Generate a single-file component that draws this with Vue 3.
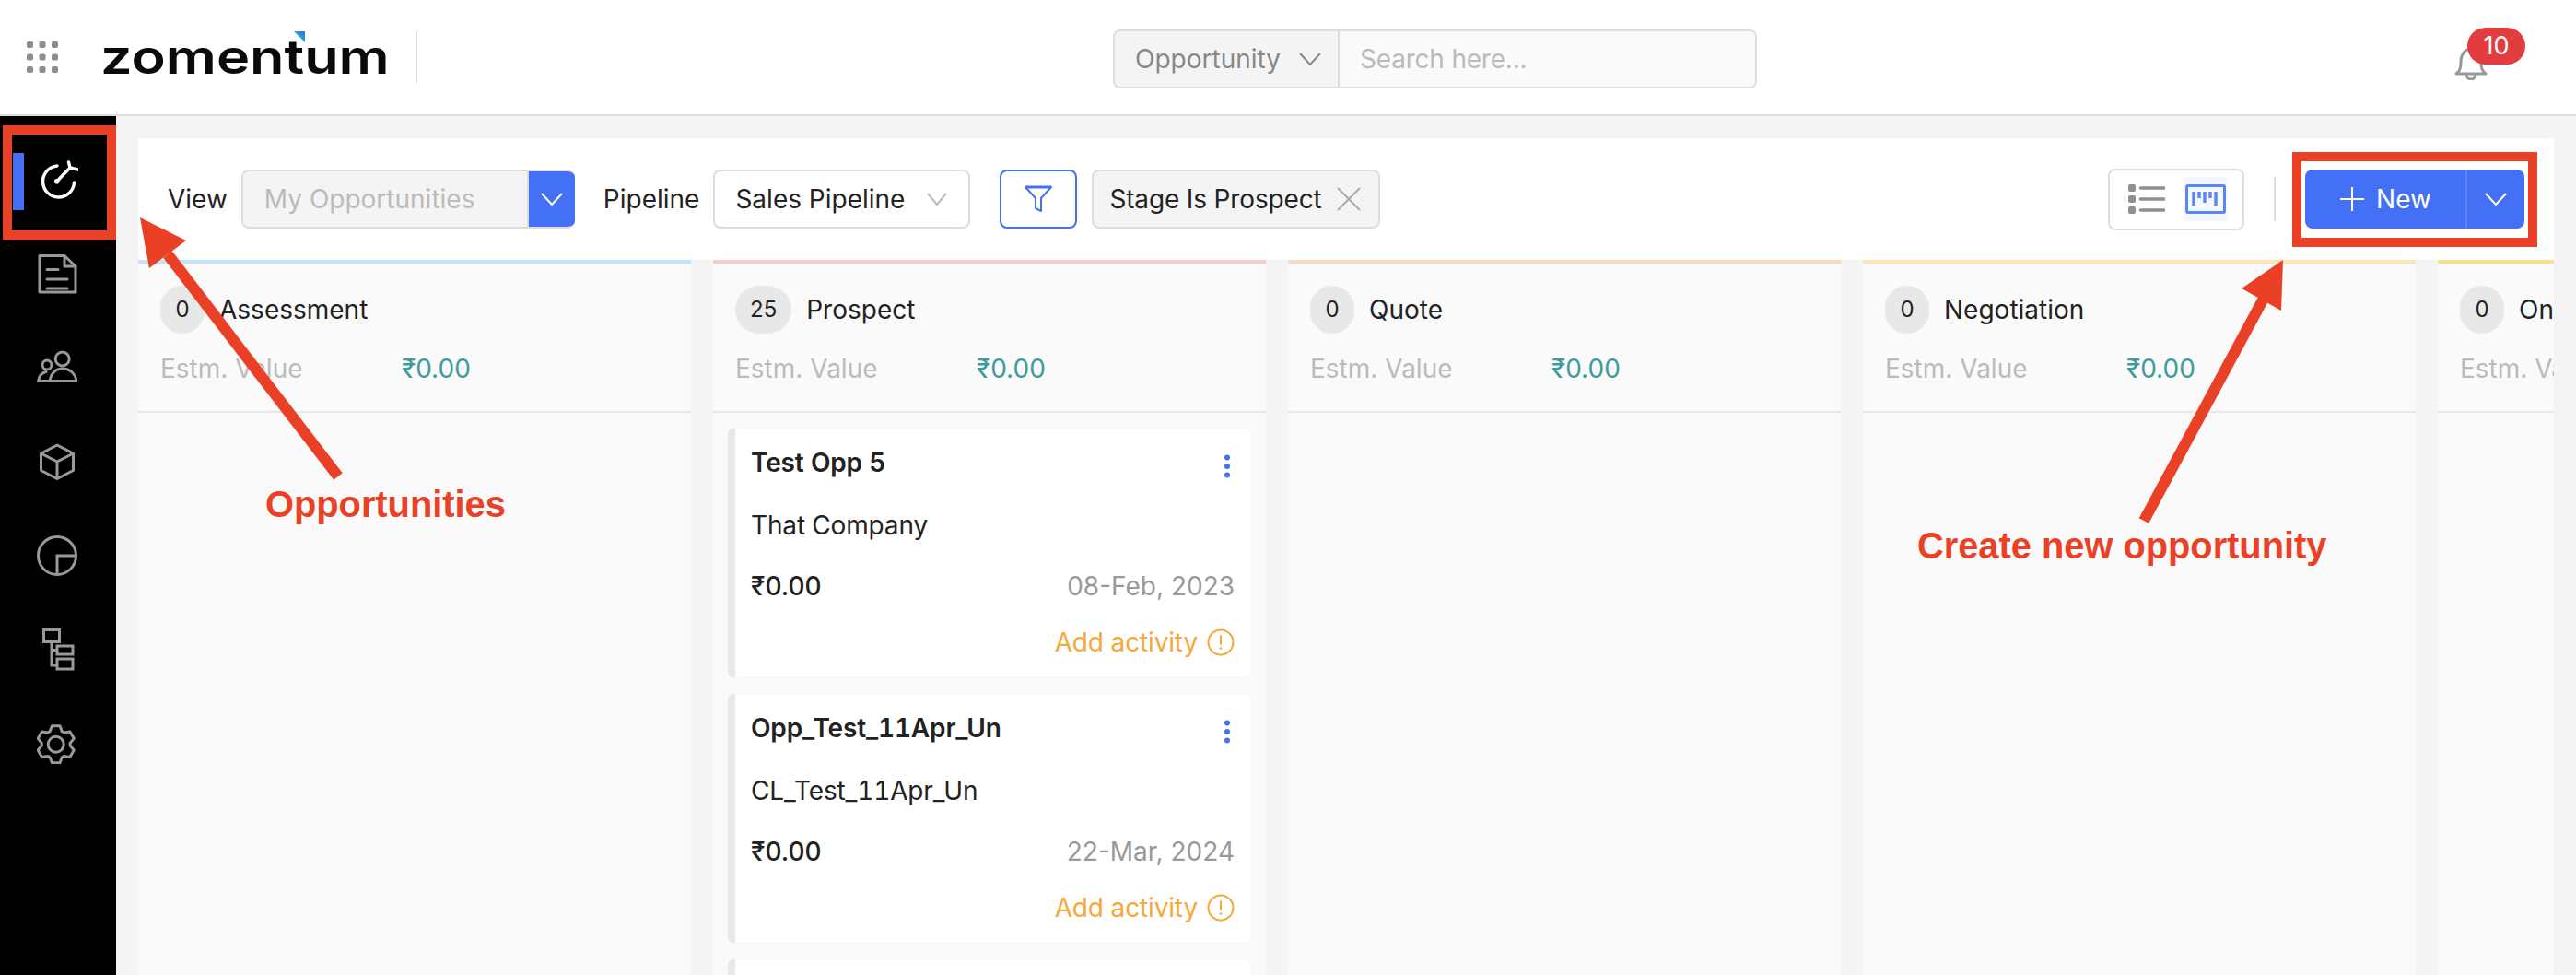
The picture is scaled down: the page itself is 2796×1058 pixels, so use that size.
<template>
  <div class="page">
    <!-- top bar -->
    <header class="topbar">
      <svg class="apps" width="34" height="34" viewBox="0 0 34 34">
        <rect v-for="d in appDots" :key="d.k" :x="d.x" :y="d.y" width="7" height="7" rx="2" fill="#8c8c8c" />
      </svg>
      <div class="logo">
        <span class="logo-text">zomentum</span>
        <svg class="logo-mark" width="12" height="12" viewBox="0 0 12 12">
          <defs>
            <linearGradient id="logoGrad" x1="1" y1="0" x2="0" y2="1">
              <stop offset="0" stop-color="#3b62e8" />
              <stop offset="0.5" stop-color="#27a7d8" />
              <stop offset="1" stop-color="#5fd06a" />
            </linearGradient>
          </defs>
          <polygon points="0,0 12,0 12,12" fill="url(#logoGrad)" />
        </svg>
      </div>
      <div class="logo-sep"></div>

      <div class="search">
        <div class="search-type">
          <span>Opportunity</span>
          <svg width="24" height="14" viewBox="0 0 24 14"><path d="M1 1l11 12L23 1" fill="none" stroke="#888" stroke-width="2" /></svg>
        </div>
        <div class="search-input">Search here...</div>
      </div>

      <div class="bell">
        <svg width="36" height="38" viewBox="0 0 36 38">
          <path d="M2 31c4-3 5-6 5-13 0-8 5-14 11-14s11 6 11 14c0 7 1 10 5 13z" fill="none" stroke="#999" stroke-width="3" stroke-linejoin="round" />
          <path d="M13 32a5 5 0 0 0 10 0" fill="none" stroke="#999" stroke-width="3" />
        </svg>
        <span class="bell-badge">10</span>
      </div>
    </header>

    <div class="body">
      <!-- left nav -->
      <nav class="sidenav">
        <div class="nav-item active">
          <span class="nav-bar"></span>
          <svg width="44" height="44" viewBox="0 0 44 44" fill="none" stroke="#fff" stroke-width="3.4" stroke-linecap="round">
            <path d="M21 7A17 17 0 1 0 39.5 25" />
            <path d="M20.7 23.7L35 9M33.5 3l1.5 6 8.5 2" />
            <circle cx="20.7" cy="23.7" r="2.8" fill="#fff" stroke="none" />
          </svg>
        </div>
        <div class="nav-item">
          <svg width="44" height="44" viewBox="0 0 44 44" fill="none" stroke="#999" stroke-width="3" stroke-linejoin="round" stroke-linecap="round">
            <path d="M3 2.5h27L42 14v28H3z" />
            <path d="M30 2.5V14h12M11 17.5h12M11 28h22M11 38h22" />
          </svg>
        </div>
        <div class="nav-item">
          <svg width="44" height="44" viewBox="0 0 44 44" fill="none" stroke="#999" stroke-width="3" stroke-linejoin="round" stroke-linecap="round">
            <circle cx="27.7" cy="12.5" r="7.5" />
            <path d="M14 36.5c1-8 6.500-13.500 14-13.500s14 5.500 15 13.500z" />
            <circle cx="11" cy="19" r="5" />
            <path d="M14 36.500H1.500c1-5 4-9 8.500-10" />
          </svg>
        </div>
        <div class="nav-item">
          <svg width="44" height="44" viewBox="0 0 44 44" fill="none" stroke="#999" stroke-width="3" stroke-linejoin="round">
            <path d="M22 4l17.500 9v18.500L22 40.500 4.500 31.500V13z" />
            <path d="M4.500 13L22 22l17.500-9M22 22v18.500" />
          </svg>
        </div>
        <div class="nav-item">
          <svg width="44" height="44" viewBox="0 0 44 44" fill="none" stroke="#999" stroke-width="3">
            <circle cx="22" cy="22" r="20.500" />
            <path d="M22 42V22h20" />
          </svg>
        </div>
        <div class="nav-item">
          <svg width="44" height="46" viewBox="0 0 44 46" fill="none" stroke="#999" stroke-width="3">
            <rect x="7.500" y="1.500" width="17" height="13" />
            <rect x="22" y="19" width="17" height="9" />
            <rect x="22" y="33" width="17" height="11" />
            <path d="M16 14v26h6M16 23.500h6" />
          </svg>
        </div>
        <div class="nav-item">
          <svg width="44" height="44" viewBox="0 0 44 44" fill="none" stroke="#999" stroke-width="3" stroke-linejoin="round">
            <circle cx="20.700" cy="22.700" r="8.500" />
            <path :d="gearPath" />
          </svg>
        </div>
      </nav>

      <main class="main">
        <!-- filters -->
        <div class="toolbar">
          <span class="tb-label">View</span>
          <div class="view-select">
            <span class="view-value">My Opportunities</span>
            <span class="view-arrow">
              <svg width="24" height="14" viewBox="0 0 24 14"><path d="M1 1l11 12L23 1" fill="none" stroke="#fff" stroke-width="2" /></svg>
            </span>
          </div>
          <span class="tb-label pipeline-label">Pipeline</span>
          <div class="pipe-select">
            <span>Sales Pipeline</span>
            <svg width="22" height="14" viewBox="0 0 22 14"><path d="M1 1l10 12L21 1" fill="none" stroke="#bbb" stroke-width="2" /></svg>
          </div>
          <button class="filter-btn">
            <svg width="30" height="30" viewBox="0 0 30 30" fill="none" stroke="#4470f5" stroke-width="2" stroke-linejoin="round">
              <path d="M1 2h28L18 14v14l-6-3V14z" />
              <path d="M1 2h28" stroke-width="3" />
            </svg>
          </button>
          <div class="chip">
            <span class="chip-text">Stage Is Prospect</span>
            <svg width="26" height="26" viewBox="0 0 26 26"><path d="M1 1l24 24M25 1L1 25" stroke="#aaa" stroke-width="2" /></svg>
          </div>

          <div class="view-toggle">
            <svg width="40" height="32" viewBox="0 0 40 32">
              <rect x="0" y="0" width="8" height="8" rx="2" fill="#8f8f8f" />
              <rect x="0" y="12" width="8" height="8" rx="2" fill="#8f8f8f" />
              <rect x="0" y="24" width="8" height="8" rx="2" fill="#8f8f8f" />
              <path d="M13.500 4h25M13.500 16h25M13.500 28h25" stroke="#8f8f8f" stroke-width="3.600" stroke-linecap="round" />
            </svg>
            <span class="kanban">
              <svg width="44" height="32" viewBox="0 0 44 32" fill="none" stroke="#5b84f7">
                <rect x="1.500" y="1.500" width="41" height="29" rx="1.500" stroke-width="3" />
                <path d="M9 8v15M15 8v7M21 8v12M27 8v7M33 8v15" stroke-width="3.400" />
              </svg>
            </span>
          </div>
          <div class="tb-sep"></div>
          <div class="new-btn">
            <div class="new-main">
              <svg width="28" height="28" viewBox="0 0 28 28"><path d="M14 1v26M1 14h26" stroke="#fff" stroke-width="2" /></svg>
              <span>New</span>
            </div>
            <div class="new-arrow">
              <svg width="24" height="14" viewBox="0 0 24 14"><path d="M1 1l11 12L23 1" fill="none" stroke="#fff" stroke-width="2" /></svg>
            </div>
          </div>
        </div>

        <!-- kanban -->
        <div class="board">
          <section v-for="col in columns" :key="col.name" class="column" :style="{ borderTopColor: col.color }">
            <div class="col-head">
              <div class="col-title">
                <span class="count">{{ col.count }}</span>
                <span class="col-name">{{ col.name }}</span>
              </div>
              <div class="col-value">
                <span class="estm">Estm. Value</span>
                <span class="amount">₹0.00</span>
              </div>
            </div>
            <div class="cards">
              <article v-for="card in col.cards" :key="card.title" class="card">
                <div class="card-top">
                  <span class="card-title">{{ card.title }}</span>
                  <svg class="kebab" width="8" height="26" viewBox="0 0 8 26">
                    <circle cx="4" cy="3.500" r="3" fill="#4470f5" />
                    <circle cx="4" cy="13" r="3" fill="#4470f5" />
                    <circle cx="4" cy="22.500" r="3" fill="#4470f5" />
                  </svg>
                </div>
                <div class="card-company">{{ card.company }}</div>
                <div class="card-meta">
                  <span class="card-price">₹0.00</span>
                  <span class="card-date">{{ card.date }}</span>
                </div>
                <div class="card-activity">
                  <span class="activity-text">Add activity</span>
                  <svg width="30" height="30" viewBox="0 0 30 30" fill="none" stroke="#f5a936" stroke-width="2">
                    <circle cx="15" cy="15" r="13.500" />
                    <path d="M15 7.500v10" />
                    <circle cx="15" cy="21.500" r="1.300" fill="#f5a936" stroke="none" />
                  </svg>
                </div>
              </article>
              <div v-if="col.cards.length" class="card card-next"></div>
            </div>
          </section>
        </div>
      </main>
    </div>

    <!-- annotations drawn over the screenshot -->
    <div class="mark mark-nav"></div>
    <div class="mark mark-new"></div>
    <svg class="arrows" width="2796" height="1058" viewBox="0 0 2796 1058">
      <polygon points="152,236 202,261 162,291" fill="#ea4126" />
      <path d="M182 276L367 517" stroke="#ea4126" stroke-width="12" />
      <polygon points="2478,282 2433,313 2476,337" fill="#ea4126" />
      <path d="M2459 320L2327 565" stroke="#ea4126" stroke-width="12" />
    </svg>
    <span class="note note-left">Opportunities</span>
    <span class="note note-right">Create new opportunity</span>
  </div>
</template>

<script setup>
const appDots = []
for (let r = 0; r < 3; r++) {
  for (let c = 0; c < 3; c++) {
    appDots.push({ k: r + '-' + c, x: c * 13.5, y: r * 13.5 })
  }
}

// six-tooth cog, built around its centre
const gearPoint = (deg, radius) => {
  const a = (deg * Math.PI) / 180
  return (20.7 + radius * Math.cos(a)).toFixed(2) + ' ' + (22.7 + radius * Math.sin(a)).toFixed(2)
}
let gearPath = ''
for (let t = 0; t < 6; t++) {
  const a = -90 + t * 60
  gearPath += (t ? 'L' : 'M') + gearPoint(a - 25, 15.5)
  gearPath += 'L' + gearPoint(a - 12, 20.5)
  gearPath += 'L' + gearPoint(a + 12, 20.5)
  gearPath += 'L' + gearPoint(a + 25, 15.5)
}
gearPath += 'Z'

const prospectCards = [
  { title: 'Test Opp 5', company: 'That Company', date: '08-Feb, 2023' },
  { title: 'Opp_Test_11Apr_Un', company: 'CL_Test_11Apr_Un', date: '22-Mar, 2024' }
]

const columns = [
  { name: 'Assessment', count: 0, color: '#c2e4fb', cards: [] },
  { name: 'Prospect', count: 25, color: '#f6ccc6', cards: prospectCards },
  { name: 'Quote', count: 0, color: '#f8d9bd', cards: [] },
  { name: 'Negotiation', count: 0, color: '#fbe6b8', cards: [] },
  { name: 'Onboarding', count: 0, color: '#f9e08f', cards: [] }
]
</script>

<style>
html,
body {
  margin: 0;
  background: #f4f4f4;
}
</style>

<style scoped>
.page {
  position: relative;
  width: 2796px;
  height: 1058px;
  overflow: hidden;
  display: flex;
  flex-direction: column;
  font-family: Inter, "Liberation Sans", sans-serif;
  font-size: 28px;
  line-height: 34px;
  color: #222;
  background: #f4f4f4;
}

/* top bar */
.topbar {
  flex: none;
  height: 124px;
  display: flex;
  align-items: center;
  padding-left: 29px;
  background: #fff;
  border-bottom: 2px solid #ddd;
}
.apps {
  flex: none;
}
.logo {
  position: relative;
  width: 309px;
  margin-left: 46px;
  height: 56px;
}
.logo-text {
  display: block;
  font-size: 51px;
  line-height: 56px;
  font-weight: 600;
  color: #0a0a0a;
  white-space: nowrap;
  transform: scaleX(1.2);
  transform-origin: left center;
}
.logo-mark {
  position: absolute;
  left: 210px;
  top: 0;
}
.logo-sep {
  width: 2px;
  height: 56px;
  margin-left: 33px;
  background: #ddd;
}
.search {
  display: flex;
  width: 699px;
  height: 64px;
  margin-left: 755px;
  margin-top: 4px;
  box-sizing: border-box;
  border: 2px solid #ddd;
  border-radius: 8px;
  overflow: hidden;
}
.search-type {
  width: 244px;
  box-sizing: border-box;
  padding: 0 18px 0 22px;
  display: flex;
  align-items: center;
  justify-content: space-between;
  color: #888;
  background: #f4f4f4;
  border-right: 2px solid #ddd;
}
.search-input {
  flex: 1;
  padding-left: 22px;
  display: flex;
  align-items: center;
  color: #bbb;
  background: #fafafa;
  letter-spacing: -0.2px;
}
.bell {
  position: relative;
  width: 36px;
  height: 38px;
  margin-left: 757px;
  margin-top: 12px;
}
.bell-badge {
  position: absolute;
  left: 14px;
  top: -19px;
  width: 63px;
  height: 40px;
  border-radius: 20px;
  background: #e23c3f;
  color: #fff;
  font-size: 27px;
  line-height: 40px;
  text-align: center;
}

/* side nav */
.body {
  flex: 1;
  min-height: 0;
  display: flex;
}
.sidenav {
  flex: none;
  width: 126px;
  padding-top: 18px;
  box-sizing: border-box;
  background: #000;
}
.nav-item {
  position: relative;
  height: 102px;
  display: flex;
  align-items: center;
  justify-content: center;
  padding-right: 2px;
}
.nav-item.active svg {
  margin-left: 2px;
}
.nav-bar {
  position: absolute;
  left: 14px;
  top: 22px;
  width: 12px;
  height: 62px;
  background: #4470f5;
}

/* main */
.main {
  flex: 1;
  min-width: 0;
  display: flex;
  flex-direction: column;
  padding: 24px 24px 0;
}
.toolbar {
  flex: none;
  height: 132px;
  display: flex;
  align-items: center;
  padding-left: 32px;
  background: #fff;
}
.tb-label {
  margin-right: 15px;
}
.view-select {
  width: 362px;
  height: 64px;
  display: flex;
  box-sizing: border-box;
  border: 2px solid #ddd;
  border-right: 0;
  border-radius: 8px;
  background: #f4f4f4;
  overflow: hidden;
}
.view-value {
  flex: 1;
  padding-left: 23px;
  line-height: 60px;
  color: #bbb;
  border-right: 2px solid #ddd;
}
.view-arrow {
  width: 50px;
  margin: -2px 0;
  display: flex;
  align-items: center;
  justify-content: center;
  background: #4470f5;
}
.pipeline-label {
  margin-left: 31px;
}
.pipe-select {
  width: 279px;
  height: 64px;
  box-sizing: border-box;
  display: flex;
  align-items: center;
  justify-content: space-between;
  padding: 0 23px 0 22px;
  border: 2px solid #ddd;
  border-radius: 8px;
}
.filter-btn {
  width: 84px;
  height: 64px;
  margin-left: 32px;
  padding: 0;
  display: flex;
  align-items: center;
  justify-content: center;
  background: #fff;
  border: 2px solid #4470f5;
  border-radius: 8px;
}
.chip {
  width: 313px;
  height: 64px;
  margin-left: 16px;
  box-sizing: border-box;
  display: flex;
  align-items: center;
  justify-content: space-between;
  padding: 0 19px 0 17px;
  background: #f4f4f4;
  border: 2px solid #ddd;
  border-radius: 8px;
}
.chip-text {
  letter-spacing: -0.15px;
}
.view-toggle {
  width: 148px;
  height: 67px;
  margin-left: auto;
  box-sizing: border-box;
  display: flex;
  align-items: center;
  padding-left: 20px;
  border: 2px solid #ddd;
  border-radius: 8px;
}
.kanban {
  width: 48px;
  height: 48px;
  margin-left: 20px;
  display: flex;
  align-items: center;
  justify-content: center;
  background: #f5f7ff;
}
.tb-sep {
  width: 2px;
  height: 48px;
  margin-left: 32px;
  background: #ddd;
}
.new-btn {
  width: 238px;
  height: 64px;
  margin-left: 32px;
  margin-right: 32px;
  display: flex;
  border-radius: 8px;
  background: #4470f5;
  color: #fff;
}
.new-main {
  flex: 1;
  display: flex;
  align-items: center;
  justify-content: center;
  gap: 12px;
  border-right: 2px solid #5d84f6;
}
.new-arrow {
  width: 62px;
  display: flex;
  align-items: center;
  justify-content: center;
}

/* board */
.board {
  flex: 1;
  min-height: 0;
  display: flex;
  gap: 24px;
  overflow: hidden;
}
.column {
  flex: 0 0 600px;
  box-sizing: border-box;
  border-top: 4px solid #ccc;
  background: #fafafa;
}
.col-head {
  height: 162px;
  box-sizing: border-box;
  padding: 24px 24px 0;
  border-bottom: 2px solid #e8e8e8;
}
.col-title {
  display: flex;
  align-items: center;
  gap: 16px;
}
.count {
  min-width: 48px;
  height: 52px;
  padding: 0 16px;
  box-sizing: border-box;
  border-radius: 26px;
  background: #e8e8e8;
  font-size: 24px;
  line-height: 52px;
  text-align: center;
}
.col-value {
  display: flex;
  margin-top: 21px;
}
.estm {
  width: 262px;
  color: #bbb;
}
.amount {
  color: #3f9a9b;
}
.cards {
  display: flex;
  flex-direction: column;
  gap: 18px;
  padding: 17px 17px 0 16px;
}
.card {
  height: 270px;
  flex: none;
  box-sizing: border-box;
  padding: 20px 17px 0 17px;
  background: #fff;
  border-left: 8px solid #e8e8e8;
  border-radius: 6px;
  box-shadow: 0 0 2px rgba(0, 0, 0, 0.05);
}
.card-top {
  display: flex;
  justify-content: space-between;
  align-items: flex-start;
}
.card-title {
  font-weight: 600;
  font-variant-numeric: tabular-nums;
  letter-spacing: -0.15px;
}
.kebab {
  margin: 8px 4px 0 0;
}
.card-company {
  margin-top: 34px;
  font-variant-numeric: tabular-nums;
  letter-spacing: -0.15px;
}
.card-meta {
  display: flex;
  justify-content: space-between;
  margin-top: 32px;
}
.card-price {
  font-weight: 500;
}
.card-date {
  color: #999;
}
.card-activity {
  display: flex;
  justify-content: flex-end;
  align-items: center;
  gap: 10px;
  margin-top: 27px;
  color: #f5a936;
}
.activity-text {
  letter-spacing: -0.15px;
}

/* annotations */
.mark {
  position: absolute;
  box-sizing: border-box;
  border: 10px solid #ea4126;
}
.mark-nav {
  left: 3px;
  top: 136px;
  width: 123px;
  height: 124px;
}
.mark-new {
  left: 2488px;
  top: 165px;
  width: 266px;
  height: 103px;
}
.arrows {
  position: absolute;
  left: 0;
  top: 0;
}
.note {
  position: absolute;
  font-family: "Liberation Sans", Arial, sans-serif;
  font-weight: 700;
  font-size: 39.8px;
  line-height: 46px;
  color: #ea4126;
  white-space: nowrap;
}
.note-left {
  left: 288px;
  top: 524px;
}
.note-right {
  left: 2081px;
  top: 569px;
}
</style>
